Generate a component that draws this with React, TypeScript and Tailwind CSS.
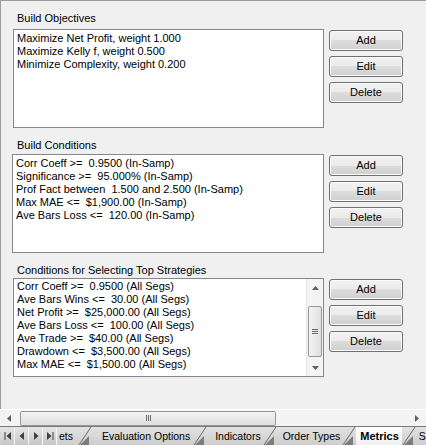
import type { ReactNode } from "react";

const objectives = [
  "Maximize Net Profit, weight 1.000",
  "Maximize Kelly f, weight 0.500",
  "Minimize Complexity, weight 0.200",
];

const buildConditions = [
  "Corr Coeff >=  0.9500 (In-Samp)",
  "Significance >=  95.000% (In-Samp)",
  "Prof Fact between  1.500 and 2.500 (In-Samp)",
  "Max MAE <=  $1,900.00 (In-Samp)",
  "Ave Bars Loss <=  120.00 (In-Samp)",
];

const topConditions = [
  "Corr Coeff >=  0.9500 (All Segs)",
  "Ave Bars Wins <=  30.00 (All Segs)",
  "Net Profit >=  $25,000.00 (All Segs)",
  "Ave Bars Loss <=  100.00 (All Segs)",
  "Ave Trade >=  $40.00 (All Segs)",
  "Drawdown <=  $3,500.00 (All Segs)",
  "Max MAE <=  $1,500.00 (All Segs)",
];

function WinButton({ label }: { label: string }) {
  return (
    <button className="w-[74px] h-[21px] rounded-[3px] border border-[#707070] bg-[linear-gradient(#f2f2f2_0%,#ebebeb_50%,#dddddd_50%,#cfcfcf_100%)] shadow-[inset_0_0_0_1px_#fbfbfb] text-[11px] leading-none text-black">
      {label}
    </button>
  );
}

function ButtonColumn() {
  return (
    <div className="flex flex-col gap-[5px] pt-[1px]">
      <WinButton label="Add" />
      <WinButton label="Edit" />
      <WinButton label="Delete" />
    </div>
  );
}

function VScrollbar() {
  return (
    <div className="w-[17px] h-full flex flex-col bg-[#f4f4f4] border-l border-[#e6e6e6]">
      <div className="h-[17px] flex items-center justify-center">
        <svg width="7" height="4" viewBox="0 0 7 4">
          <path d="M0 4 L3.5 0 L7 4 Z" fill="#606060" />
        </svg>
      </div>
      <div className="h-[10px]" />
      <div className="mx-[1px] h-[51px] rounded-[2px] border border-[#979797] bg-[linear-gradient(90deg,#f3f3f3,#e0e0e0)] flex items-center justify-center">
        <div className="flex flex-col gap-[1px]">
          <div className="w-[6px] h-[1px] bg-[#6b6b6b]" />
          <div className="w-[6px] h-[1px] bg-[#6b6b6b]" />
          <div className="w-[6px] h-[1px] bg-[#6b6b6b]" />
        </div>
      </div>
      <div className="flex-1 flex items-end justify-center pb-[6px]">
        <svg width="7" height="4" viewBox="0 0 7 4">
          <path d="M0 0 L3.5 4 L7 0 Z" fill="#606060" />
        </svg>
      </div>
    </div>
  );
}

function ListBox({
  items,
  width,
  padTop,
  scroll,
}: {
  items: string[];
  width: string;
  padTop: string;
  scroll?: boolean;
}) {
  return (
    <div className={`${width} h-[99px] bg-white border border-[#828790] flex`}>
      <div className={`flex-1 pl-[3px] ${padTop} text-[11px] leading-[13px] text-black whitespace-pre overflow-hidden`}>
        {items.map((t) => (
          <div key={t}>{t}</div>
        ))}
      </div>
      {scroll && <VScrollbar />}
    </div>
  );
}

function Section({
  label,
  labelClass,
  children,
}: {
  label: string;
  labelClass: string;
  children: ReactNode;
}) {
  return (
    <div>
      <div className={`pl-[16px] text-[11px] leading-[13px] text-black ${labelClass}`}>{label}</div>
      <div className="flex gap-[5px]">
        {children}
        <ButtonColumn />
      </div>
    </div>
  );
}

function TabSep() {
  return (
    <svg width="14" height="18" viewBox="0 0 14 18" className="shrink-0">
      <path d="M2 18 L11 9 L11 18 Z" fill="#7c7c7c" />
      <path d="M1 18 L13 0" stroke="#6a6a6a" strokeWidth="1" />
    </svg>
  );
}

function NavButton({ d }: { d: ReactNode }) {
  return (
    <div className="w-[14px] h-[17px] bg-[linear-gradient(#e4e4e4,#c6c6c6)] border-r border-[#f6f6f6] flex items-center justify-center">
      <svg width="8" height="8" viewBox="0 0 8 8">
        {d}
      </svg>
    </div>
  );
}

function Tab({ children, className }: { children: ReactNode; className: string }) {
  return <div className={`h-full shrink-0 flex items-center whitespace-nowrap ${className}`}>{children}</div>;
}

export default function App() {
  return (
    <div className="w-[426px] h-[445px] bg-[#f0f0f0] overflow-hidden flex flex-col font-['Liberation_Sans',Arial,sans-serif]">
      {/* Panel */}
      <div className="flex-1 border-l border-t border-[#9c9c9c] flex flex-col">
        <Section label="Build Objectives" labelClass="pt-[11px] pb-[4px]">
          <div className="pl-[12px]">
            <ListBox items={objectives} width="w-[311px]" padTop="pt-[2px]" />
          </div>
        </Section>
        <Section label="Build Conditions" labelClass="pt-[11px] pb-[2px]">
          <div className="pl-[11px]">
            <ListBox items={buildConditions} width="w-[312px]" padTop="pt-[2px]" />
          </div>
        </Section>
        <Section label="Conditions for Selecting Top Strategies" labelClass="pt-[11px] pb-[1px]">
          <div className="pl-[12px]">
            <ListBox items={topConditions} width="w-[311px]" padTop="pt-[1px]" scroll />
          </div>
        </Section>
      </div>

      {/* Horizontal scrollbar */}
      <div className="h-[17px] shrink-0 bg-[#f3f3f3] border-t border-white flex items-center">
        <div className="w-[18px] flex items-center justify-center">
          <svg width="4" height="7" viewBox="0 0 4 7">
            <path d="M4 0 L0 3.5 L4 7 Z" fill="#606060" />
          </svg>
        </div>
        <div className="ml-[2px] w-[256px] h-[15px] rounded-[2px] border border-[#979797] bg-[linear-gradient(#f3f3f3,#dedede)] flex items-center justify-center">
          <div className="flex gap-[1px]">
            <div className="w-[1px] h-[6px] bg-[#6b6b6b]" />
            <div className="w-[1px] h-[6px] bg-[#6b6b6b]" />
            <div className="w-[1px] h-[6px] bg-[#6b6b6b]" />
          </div>
        </div>
        <div className="flex-1" />
        <div className="w-[18px] flex items-center justify-center">
          <svg width="4" height="7" viewBox="0 0 4 7">
            <path d="M0 0 L4 3.5 L0 7 Z" fill="#606060" />
          </svg>
        </div>
      </div>

      {/* Sheet tabs */}
      <div className="h-[19px] shrink-0 border-t border-[#7a7a7a] bg-[linear-gradient(#e2e2e2,#cdcdcd)] flex items-end text-[10.5px] leading-none text-black overflow-hidden">
        <div className="flex h-full shrink-0 items-center pl-[1px] pr-[2px]">
          <NavButton d={<><path d="M1 0 V8" stroke="#404040" /><path d="M7 0 L2.5 4 L7 8 Z" fill="#404040" /></>} />
          <NavButton d={<path d="M6 0 L1.5 4 L6 8 Z" fill="#404040" />} />
          <NavButton d={<path d="M2 0 L6.5 4 L2 8 Z" fill="#404040" />} />
          <NavButton d={<><path d="M1 0 L5.5 4 L1 8 Z" fill="#404040" /><path d="M7 0 V8" stroke="#404040" /></>} />
        </div>
        <Tab className="pr-[5px]">ets</Tab>
        <TabSep />
        <Tab className="pl-[10px] pr-[3px]">Evaluation Options</Tab>
        <TabSep />
        <Tab className="pl-[8px] pr-[2px]">Indicators</Tab>
        <TabSep />
        <Tab className="pl-[6px] pr-[2px]">Order Types</Tab>
        <TabSep />
        <Tab className="pl-[4px] pr-[3px] text-[11px] font-bold bg-[linear-gradient(#ffffff,#f0f0f0)]">Metrics</Tab>
        <TabSep />
        <Tab className="pl-[3px]">S</Tab>
      </div>
    </div>
  );
}
